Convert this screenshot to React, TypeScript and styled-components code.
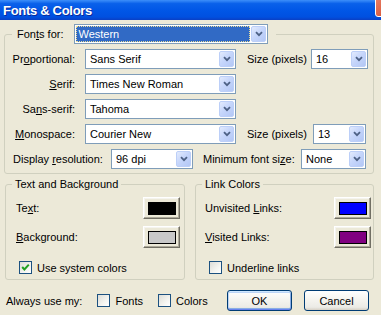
import styled, { createGlobalStyle } from 'styled-components';

const GlobalStyle = createGlobalStyle`
  html, body {
    margin: 0;
    padding: 0;
    background: #ece9d8;
  }

  body {
    font-family: "Liberation Sans", Arial, sans-serif;
    font-size: 11px;
    color: #000;
  }

  u {
    text-underline-offset: 1px;
  }
`;

const Window = styled.div`
  width: 381px;
  height: 315px;
  overflow: hidden;
  background: #ece9d8;
  display: flex;
  flex-direction: column;
`;

const TitleBar = styled.div`
  height: 20px;
  flex-shrink: 0;
  display: flex;
  align-items: center;
  justify-content: space-between;
  padding-left: 3px;
  overflow: hidden;
  background: linear-gradient(
    #3d8ffa 0%,
    #0a61ea 18%,
    #0056e6 55%,
    #0050e0 85%,
    #0a3fc4 100%
  );
  color: #fff;
  font-weight: bold;
  font-size: 13px;
  letter-spacing: -0.3px;
  text-shadow: 1px 1px 0 #0a2a9a;
`;

const CloseBox = styled.div`
  align-self: flex-start;
  width: 21px;
  height: 21px;
  margin-top: -4px;
  margin-right: -15px;
  box-sizing: border-box;
  border: 1px solid #fff;
  border-radius: 3px;
  background: linear-gradient(135deg, #e8806a, #d44a28);
`;

const Body = styled.div`
  flex: 1;
  display: flex;
  flex-direction: column;
  padding: 4px 7px 0 4px;
`;

interface GroupProps {
  $w?: number;
  $ml?: number;
  $pt?: number;
  $pb?: number;
}

const Group = styled.fieldset<GroupProps>`
  ${({ $w, $ml = 0, $pt = 5, $pb = 4 }) => `
    margin: 0 0 0 ${$ml}px;
    min-width: 0;
    ${$w ? `width: ${$w}px;` : ''}
    box-sizing: border-box;
    border: 1px solid #d0d0bf;
    border-radius: 3px;
    padding: ${$pt}px 0 ${$pb}px 0;
  `}
`;

const Legend = styled.legend<{ $ml: number; $pl: number; $pr: number }>`
  ${({ $ml, $pl, $pr }) => `
    margin-left: ${$ml}px;
    padding: 0 ${$pr}px 0 ${$pl}px;
    display: flex;
    align-items: center;
    line-height: 13px;
  `}
`;

const Rows = styled.div`
  display: flex;
  flex-direction: column;
  gap: 5px;
`;

const Row = styled.div<{ $pl?: number }>`
  display: flex;
  align-items: center;
  height: 20px;
  padding-left: ${({ $pl = 0 }) => $pl}px;
`;

interface LabelProps {
  $w?: number;
  $right?: boolean;
  $ml?: number;
}

const Label = styled.span<LabelProps>`
  ${({ $w, $right, $ml = 0 }) => `
    ${$w ? `width: ${$w}px;` : ''}
    flex-shrink: 0;
    margin-left: ${$ml}px;
    white-space: nowrap;
    text-align: ${$right ? 'right' : 'left'};
  `}
`;

const Combo = styled.div<{ $w: number; $ml?: number }>`
  width: ${({ $w }) => $w}px;
  margin-left: ${({ $ml = 0 }) => $ml}px;
  height: 20px;
  flex-shrink: 0;
  box-sizing: border-box;
  border: 1px solid #7f9db9;
  background: #fff;
  padding: 1px;
  display: flex;
`;

const ComboValue = styled.div<{ $selected?: boolean }>`
  flex: 1;
  display: flex;
  align-items: center;
  padding-left: 3px;
  white-space: nowrap;
  overflow: hidden;

  ${({ $selected }) => $selected ? `
    margin-right: 1px;
    padding-left: 2px;
    background: #316ac5;
    color: #fff;
    outline: 1px dotted #e9dc96;
    outline-offset: -1px;
  ` : ''}
`;

const ComboButton = styled.div`
  width: 15px;
  flex-shrink: 0;
  box-sizing: border-box;
  border: 1px solid #bccff8;
  border-radius: 2px;
  background: linear-gradient(135deg, #e3ebfd 0%, #c6d6fb 45%, #b3c7f5 100%);
  display: flex;
  align-items: center;
  justify-content: center;
`;

const Chevron = () => (
  <svg width="8" height="6" viewBox="0 0 8 6">
    <path d="M1 1.2 L4 4.2 L7 1.2" fill="none" stroke="#4d6185" strokeWidth="1.8" />
  </svg>
);

const Select = ({ value, w, ml, selected }: { value: string; w: number; ml?: number; selected?: boolean }) => (
  <Combo $w={w} $ml={ml}>
    <ComboValue $selected={selected}>{value}</ComboValue>
    <ComboButton>
      <Chevron />
    </ComboButton>
  </Combo>
);

const GroupRow = styled.div`
  display: flex;
  gap: 10px;
  margin-top: 4px;
`;

const ColorRow = styled.div<{ $pl: number; $mr: number; $mt?: number }>`
  ${({ $pl, $mr, $mt = 0 }) => `
    display: flex;
    align-items: center;
    justify-content: space-between;
    height: 22px;
    padding: 0 ${$mr}px 0 ${$pl}px;
    margin-top: ${$mt}px;
  `}
`;

const ColorButton = styled.div`
  width: 37px;
  height: 22px;
  box-sizing: border-box;
  border: 1px solid;
  border-color: #fff #716f64 #716f64 #fff;
  box-shadow: inset -1px -1px 0 #aca899, inset 1px 1px 0 #f5f4ef;
  background: #ece9d8;
  display: flex;
  align-items: center;
  justify-content: center;
`;

const Swatch = styled.div<{ $color: string }>`
  width: 28px;
  height: 13px;
  box-sizing: border-box;
  border: 1px solid #000;
  background: ${({ $color }) => $color};
`;

const CheckRow = styled.div<{ $pl: number; $mt?: number }>`
  display: flex;
  align-items: center;
  gap: 5px;
  height: 13px;
  padding-left: ${({ $pl }) => $pl}px;
  margin-top: ${({ $mt = 0 }) => $mt}px;
`;

const Box = styled.span`
  width: 13px;
  height: 13px;
  flex-shrink: 0;
  box-sizing: border-box;
  border: 1px solid #1c5180;
  background: linear-gradient(135deg, #dcdcd7 0%, #f4f4f0 60%, #fff 100%);
  display: flex;
  align-items: center;
  justify-content: center;
`;

const CheckBox = ({ checked }: { checked?: boolean }) => (
  <Box>
    {checked ? (
      <svg width="11" height="11" viewBox="0 0 11 11">
        <path d="M2.2 5 L4.4 7.4 L8.8 2.6" fill="none" stroke="#21a121" strokeWidth="2" />
      </svg>
    ) : null}
  </Box>
);

const Footer = styled.div`
  display: flex;
  align-items: center;
  height: 21px;
  margin-top: 10px;
  padding-left: 2px;
`;

const FooterCheck = styled.span<{ $ml: number }>`
  display: flex;
  align-items: center;
  gap: 5px;
  margin-left: ${({ $ml }) => $ml}px;
`;

const Buttons = styled.div`
  margin-left: auto;
  margin-right: 5px;
  display: flex;
  gap: 12px;
`;

const PushButton = styled.div<{ $default?: boolean }>`
  width: 65px;
  height: 21px;
  box-sizing: border-box;
  border: 1px solid #003c74;
  border-radius: 3px;
  background: linear-gradient(#ffffff 0%, #f4f3ee 50%, #ecebe6 85%, #d6d0c5 100%);
  display: flex;
  align-items: center;
  justify-content: center;
  ${({ $default }) => $default ? `
    box-shadow:
      inset 0 1px 0 #cee7ff,
      inset 0 -1px 0 #6982ee,
      inset 1px 0 0 #bcd4f6,
      inset -1px 0 0 #89ade4,
      inset 0 2px 0 #bcd4f6,
      inset 0 -2px 0 #89ade4;
  ` : ''}
`;

const App = () => (
  <>
    <GlobalStyle />
    <Window>
      <TitleBar>
        <span>Fonts &amp; Colors</span>
        <CloseBox />
      </TitleBar>

      <Body>
        <Group $pt={5} $pb={4}>
          <Legend $ml={7} $pl={5} $pr={8}>
            <Label>Fon<u>t</u>s for:</Label>
            <Select value="Western" w={194} ml={11} selected />
          </Legend>
          <Rows>
            <Row>
              <Label $w={70} $right>Pr<u>o</u>portional:</Label>
              <Select value="Sans Serif" w={151} ml={10} />
              <Label $w={64} $ml={11}>Size (pixels)</Label>
              <Select value="16" w={57} />
            </Row>
            <Row>
              <Label $w={70} $right><u>S</u>erif:</Label>
              <Select value="Times New Roman" w={151} ml={10} />
            </Row>
            <Row>
              <Label $w={70} $right>Sa<u>n</u>s-serif:</Label>
              <Select value="Tahoma" w={151} ml={10} />
            </Row>
            <Row>
              <Label $w={70} $right><u>M</u>onospace:</Label>
              <Select value="Courier New" w={151} ml={10} />
              <Label $w={66} $ml={11}>Size (pixels)</Label>
              <Select value="13" w={53} />
            </Row>
            <Row $pl={8}>
              <Label $w={98}>Display <u>r</u>esolution:</Label>
              <Select value="96 dpi" w={82} />
              <Label $w={98} $ml={10}>Minimum font si<u>z</u>e:</Label>
              <Select value="None" w={65} />
            </Row>
          </Rows>
        </Group>

        <GroupRow>
          <Group $w={180} $ml={1} $pt={6} $pb={5}>
            <Legend $ml={6} $pl={3} $pr={3}>Text and Background</Legend>
            <ColorRow $pl={10} $mr={4}>
              <Label>Te<u>x</u>t:</Label>
              <ColorButton><Swatch $color="#000000" /></ColorButton>
            </ColorRow>
            <ColorRow $pl={10} $mr={4} $mt={7}>
              <Label><u>B</u>ackground:</Label>
              <ColorButton><Swatch $color="#c8c8c8" /></ColorButton>
            </ColorRow>
            <CheckRow $pl={13} $mt={13}>
              <CheckBox checked />
              <Label>Use system colors</Label>
            </CheckRow>
          </Group>

          <Group $w={179} $pt={6} $pb={5}>
            <Legend $ml={6} $pl={3} $pr={3}>Link Colors</Legend>
            <ColorRow $pl={9} $mr={2}>
              <Label>Unvisited <u>L</u>inks:</Label>
              <ColorButton><Swatch $color="#0000ff" /></ColorButton>
            </ColorRow>
            <ColorRow $pl={9} $mr={2} $mt={7}>
              <Label><u>V</u>isited Links:</Label>
              <ColorButton><Swatch $color="#800080" /></ColorButton>
            </ColorRow>
            <CheckRow $pl={13} $mt={13}>
              <CheckBox />
              <Label>Underline links</Label>
            </CheckRow>
          </Group>
        </GroupRow>

        <Footer>
          <Label>Always use my:</Label>
          <FooterCheck $ml={15}>
            <CheckBox />
            <Label>Fonts</Label>
          </FooterCheck>
          <FooterCheck $ml={15}>
            <CheckBox />
            <Label>Colors</Label>
          </FooterCheck>
          <Buttons>
            <PushButton $default>OK</PushButton>
            <PushButton>Cancel</PushButton>
          </Buttons>
        </Footer>
      </Body>
    </Window>
  </>
);

export default App;
